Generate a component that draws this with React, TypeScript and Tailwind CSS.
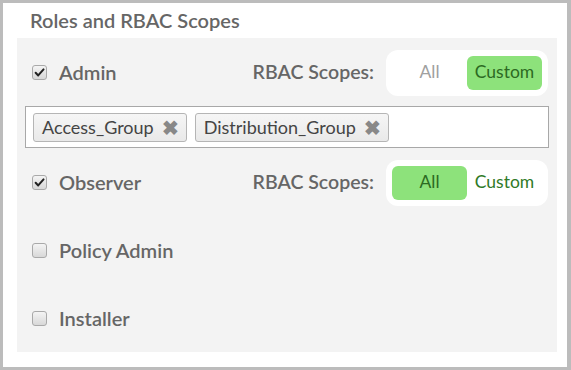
import React from "react";

// ─── Checkbox ─────────────────────────────────────────────────────────────────

const Box = ({ checked }: { checked: boolean }) => (
  <span className="w-[15px] h-[15px] rounded-[3px] border border-[#a9a9a9] bg-gradient-to-b from-[#f4f4f4] to-[#d8d8d8] flex items-center justify-center shrink-0">
    {checked && (
      <svg viewBox="0 0 12 12" className="w-[11px] h-[11px]">
        <path d="M1.8 6.3 L4.6 9.2 L10.4 2.6" fill="none" stroke="#222" strokeWidth={2.2} strokeLinecap="round" strokeLinejoin="round" />
      </svg>
    )}
  </span>
);

// ─── Scope toggle ─────────────────────────────────────────────────────────────

const ScopeToggle = ({ value }: { value: "all" | "custom" }) => (
  <div className="bg-white rounded-[12px] p-[6px] flex">
    {(["all", "custom"] as const).map((v) => (
      <div
        key={v}
        className={
          value === v
            ? "w-[75px] h-[34px] rounded-[6px] bg-[#8de27b] text-[#2c6a22] flex items-center justify-center text-[17.5px]"
            : v === "all"
            ? "w-[75px] h-[34px] text-[#a0a0a0] flex items-center justify-center text-[17.5px]"
            : "w-[75px] h-[34px] text-[#2f7a27] flex items-center justify-center text-[17.5px]"
        }
      >
        {v === "all" ? "All" : "Custom"}
      </div>
    ))}
  </div>
);

// ─── Role row ─────────────────────────────────────────────────────────────────

const RoleRow = ({
  label,
  checked,
  scope,
}: {
  label:   string;
  checked: boolean;
  scope?:  "all" | "custom";
}) => (
  <div className="h-[47px] flex items-center pl-[15px] pr-[9px]">
    <Box checked={checked} />
    <span className="ml-[12px] mb-[2px] text-[20px] font-semibold text-[#666]">{label}</span>
    {scope && (
      <div className="ml-auto flex items-center gap-[12px]">
        <span className="mb-[1px] text-[19.5px] font-semibold text-[#666]">RBAC Scopes:</span>
        <ScopeToggle value={scope} />
      </div>
    )}
  </div>
);

// ─── Tag ──────────────────────────────────────────────────────────────────────

const Tag = ({ name }: { name: string }) => (
  <div className="h-[29px] flex items-center gap-[8px] pl-[8px] pr-[7px] rounded-[3px] border border-[#b5b5b5] bg-gradient-to-b from-[#f6f6f6] to-[#e9e9e9] text-[18px] text-[#444]">
    {name}
    <span className="text-[#888] text-[20px] font-bold leading-none">✖</span>
  </div>
);

export default function App() {
  return (
    <div
      className="w-[571px] h-[370px] border-t-[3px] border-l-[3px] border-b-[3px] border-r-[4px] border-[#bcbcbc] bg-white flex flex-col"
      style={{ fontFamily: "Lato, 'Open Sans', sans-serif" }}
    >
      <h2 className="h-[35px] pl-[27px] pt-[5px] text-[20px] font-semibold text-[#666] leading-[24px]">
        Roles and RBAC Scopes
      </h2>

      <div className="ml-[14px] mr-[10px] mb-[15px] flex-1 bg-[#f3f3f3] pt-[11px] flex flex-col">
        <RoleRow label="Admin" checked scope="custom" />

        <div className="mx-[8px] mt-[10px] h-[42px] border border-[#a8a8a8] bg-white flex items-center gap-[8px] px-[7px]">
          <Tag name="Access_Group" />
          <Tag name="Distribution_Group" />
        </div>

        <div className="mt-[11px] flex flex-col gap-[21px]">
          <RoleRow label="Observer" checked scope="all" />
          <RoleRow label="Policy Admin" checked={false} />
          <RoleRow label="Installer" checked={false} />
        </div>
      </div>
    </div>
  );
}
